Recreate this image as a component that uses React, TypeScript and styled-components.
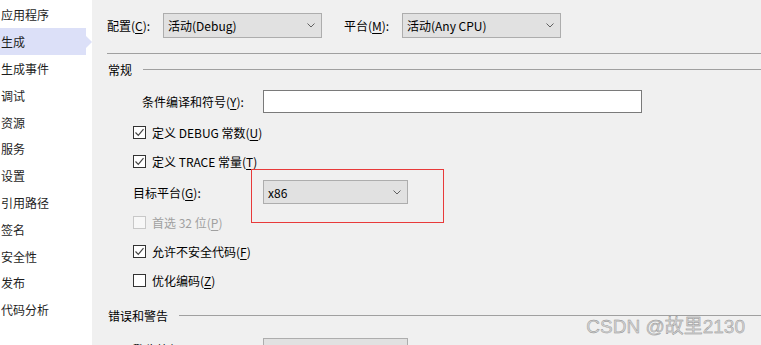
import React from 'react';
import styled, {createGlobalStyle} from 'styled-components';

const GlobalStyle = createGlobalStyle`
    html, body {
        margin: 0;
        padding: 0;
    }
    body {
        font-family: "Noto Sans CJK SC", "Noto Sans", sans-serif;
        font-size: 12px;
        color: #000;
    }
`;

const NAV_ITEMS = ['应用程序', '生成', '生成事件', '调试', '资源', '服务', '设置', '引用路径', '签名', '安全性', '发布', '代码分析'];

const Chevron = () => (
    <svg width='8' height='5' viewBox='0 0 8 5'>
        <path d='M0.5 0.5 L4 4 L7.5 0.5' fill='none' stroke='#606060' strokeWidth='1'/>
    </svg>
);

const Check = () => (
    <svg width='11' height='11' viewBox='0 0 11 11'>
        <path d='M1.5 5.5 L4.3 8.3 L9.5 2.2' fill='none' stroke='#444' strokeWidth='1.2'/>
    </svg>
);

// mnemonic letter, underlined like a Win32 label
const Key = ({children}: {children: React.ReactNode}) => <U>{children}</U>;

interface CheckRowProps {
    checked?: boolean;
    disabled?: boolean;
    children: React.ReactNode;
}

const CheckRow = (props: CheckRowProps) => (
    <Row $height={29} $indent={26}>
        <Box $disabled={props.disabled}>{props.checked && <Check/>}</Box>
        <Label $disabled={props.disabled}>{props.children}</Label>
    </Row>
);

export default function App() {
    return (
        <Page>
            <GlobalStyle/>
            <Nav>
                {NAV_ITEMS.map((item) => (
                    <NavItem
                        key={item}
                        $active={item === '生成'}
                    >
                        {item}
                    </NavItem>
                ))}
            </Nav>
            <Main>
                <TopRow>
                    <Label $width={56}>{'配置('}<Key>{'C'}</Key>{'):'}</Label>
                    <Select $width={159}>
                        <span>{'活动(Debug)'}</span>
                        <Chevron/>
                    </Select>
                    <Label
                        $width={58}
                        $gap={22}
                    >
                        {'平台('}<Key>{'M'}</Key>{'):'}
                    </Label>
                    <Select $width={159}>
                        <span>{'活动(Any CPU)'}</span>
                        <Chevron/>
                    </Select>
                </TopRow>
                <Separator/>
                <Header $height={30}>
                    <span>{'常规'}</span>
                    <HeaderLine/>
                </Header>
                <Row
                    $height={34}
                    $indent={35}
                >
                    <Label $width={121}>{'条件编译和符号('}<Key>{'Y'}</Key>{'):'}</Label>
                    <TextBox/>
                </Row>
                <CheckRow checked={true}>{'定义 DEBUG 常数('}<Key>{'U'}</Key>{')'}</CheckRow>
                <CheckRow checked={true}>{'定义 TRACE 常量('}<Key>{'T'}</Key>{')'}</CheckRow>
                <Row
                    $height={32}
                    $indent={26}
                >
                    <Label $width={130}>{'目标平台('}<Key>{'G'}</Key>{'):'}</Label>
                    <Select
                        $width={145}
                        $height={24}
                    >
                        <span>{'x86'}</span>
                        <Chevron/>
                    </Select>
                    <Highlight/>
                </Row>
                <CheckRow disabled={true}>{'首选 32 位('}<Key>{'P'}</Key>{')'}</CheckRow>
                <CheckRow checked={true}>{'允许不安全代码('}<Key>{'F'}</Key>{')'}</CheckRow>
                <CheckRow>{'优化编码('}<Key>{'Z'}</Key>{')'}</CheckRow>
                <Header $height={40}>
                    <span>{'错误和警告'}</span>
                    <HeaderLine/>
                </Header>
                <Row
                    $height={29}
                    $indent={26}
                >
                    <Label $width={130}>{'警告等级('}<Key>{'A'}</Key>{'):'}</Label>
                    <Select
                        $width={145}
                        $height={24}
                    />
                </Row>
            </Main>
            <Watermark>{'CSDN @故里2130'}</Watermark>
        </Page>
    );
}

// Styled components
const Page = styled.div`
    position: relative;
    width: 761px;
    height: 345px;
    display: flex;
    overflow: hidden;
    background: #f0f0f0;
`;

const Nav = styled.nav`
    width: 92px;
    flex-shrink: 0;
    background: #fff;
    display: flex;
    flex-direction: column;
    padding-top: 1.6px;
`;

const NavItem = styled.div<{$active?: boolean}>`
    position: relative;
    width: 86px;
    height: 26.8px;
    display: flex;
    align-items: center;
    padding-left: 1px;
    box-sizing: border-box;
    color: #1e1e1e;
    background: ${(p) => (p.$active ? '#dce0f8' : 'transparent')};

    &::after {
        content: '';
        display: ${(p) => (p.$active ? 'block' : 'none')};
        position: absolute;
        left: 86px;
        top: 50%;
        transform: translateY(-50%);
        border-left: 6px solid #dce0f8;
        border-top: 6px solid transparent;
        border-bottom: 6px solid transparent;
    }
`;

const Main = styled.main`
    flex: 1;
    display: flex;
    flex-direction: column;
    padding-left: 15px;
    min-width: 0;
`;

const TopRow = styled.div`
    margin-top: 13px;
    height: 25px;
    display: flex;
    align-items: center;
    flex-shrink: 0;
`;

const Label = styled.span<{$width?: number; $gap?: number; $disabled?: boolean}>`
    ${(p) => (p.$width ? `width: ${p.$width}px;` : '')}
    margin-left: ${(p) => p.$gap || 0}px;
    flex-shrink: 0;
    white-space: nowrap;
    color: ${(p) => (p.$disabled ? '#a0a0a0' : '#000')};
`;

const U = styled.span`
    text-decoration: underline;
    text-underline-offset: 2px;
`;

const Select = styled.div<{$width: number; $height?: number}>`
    width: ${(p) => p.$width}px;
    height: ${(p) => p.$height || 25}px;
    box-sizing: border-box;
    flex-shrink: 0;
    display: flex;
    align-items: center;
    justify-content: space-between;
    padding: 0 6px 0 4px;
    background: #e1e1e1;
    border: 1px solid #adadad;
    white-space: nowrap;
`;

const Separator = styled.div`
    margin-top: 15px;
    height: 1px;
    flex-shrink: 0;
    background: #a0a0a0;
`;

const Header = styled.div<{$height: number}>`
    height: ${(p) => p.$height}px;
    flex-shrink: 0;
    display: flex;
    align-items: center;
    padding-left: 1px;
`;

const HeaderLine = styled.div`
    flex: 1;
    height: 1px;
    margin-left: 11px;
    background: #a0a0a0;
`;

const Row = styled.div<{$height: number; $indent: number}>`
    position: relative;
    height: ${(p) => p.$height}px;
    flex-shrink: 0;
    display: flex;
    align-items: center;
    padding-left: ${(p) => p.$indent}px;
`;

const TextBox = styled.div`
    width: 379px;
    height: 23px;
    box-sizing: border-box;
    background: #fff;
    border: 1px solid #7a7a7a;
`;

const Box = styled.span<{$disabled?: boolean}>`
    width: 13px;
    height: 13px;
    box-sizing: border-box;
    flex-shrink: 0;
    margin-right: 6px;
    display: flex;
    align-items: center;
    justify-content: center;
    background: ${(p) => (p.$disabled ? '#f7f7f7' : '#fff')};
    border: 1px solid ${(p) => (p.$disabled ? '#c8c8c8' : '#333')};
`;

const Highlight = styled.div`
    position: absolute;
    left: 144px;
    top: -7px;
    width: 193px;
    height: 54px;
    box-sizing: border-box;
    border: 1px solid #e83a3a;
    pointer-events: none;
`;

const Watermark = styled.div`
    position: absolute;
    right: 16px;
    bottom: 7px;
    font-family: "Liberation Sans", "Noto Sans CJK SC", sans-serif;
    font-size: 19px;
    color: #d4d4d4;
    -webkit-text-stroke: 0.4px #8c8c8c;
    white-space: nowrap;
`;
